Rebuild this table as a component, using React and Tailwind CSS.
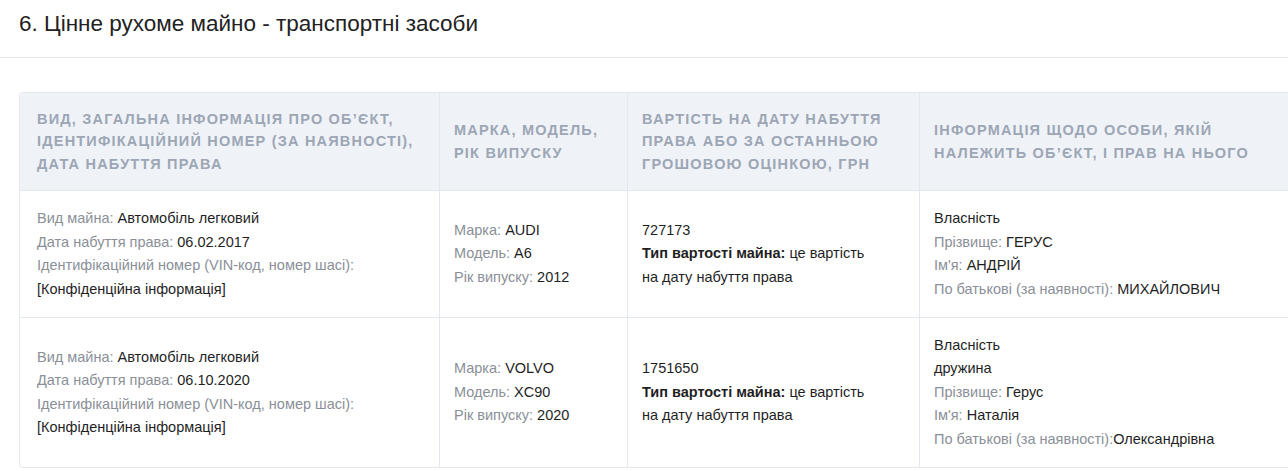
const rows = [
  {
    date: '06.02.2017',
    brand: 'AUDI',
    model: 'A6',
    year: '2012',
    cost: '727173',
    owner: [
      { value: 'Власність' },
      { label: 'Прізвище:', value: 'ГЕРУС' },
      { label: "Ім'я:", value: 'АНДРІЙ' },
      { label: 'По батькові (за наявності):', value: 'МИХАЙЛОВИЧ' },
    ],
  },
  {
    date: '06.10.2020',
    brand: 'VOLVO',
    model: 'XC90',
    year: '2020',
    cost: '1751650',
    owner: [
      { value: 'Власність' },
      { value: 'дружина' },
      { label: 'Прізвище:', value: 'Герус' },
      { label: "Ім'я:", value: 'Наталія' },
      { label: 'По батькові (за наявності):', value: 'Олександрівна', tight: true },
    ],
  },
]

function Line({ label, value, tight }) {
  return (
    <div>
      {label && <span className="text-[#8a8f98]">{label}</span>}
      {label && !tight && ' '}
      <span className="text-[#1f1f1f]">{value}</span>
    </div>
  )
}

const th = 'border-r border-[#e3e8ee] px-[14px] py-[12px] text-left align-middle font-bold uppercase leading-[22.5px] tracking-[1.2px] text-[#9ca6b4]'
const td = 'border-r border-[#e3e8ee] px-[14px] align-middle'

export default function App() {
  return (
    <div className="h-[471px] w-[1288px] overflow-hidden bg-white font-['Liberation_Sans',Arial,sans-serif] text-[14.5px] text-[#1f1f1f]">
      <h2 className="px-[19px] pt-[8px] pb-[17px] text-[22.5px] leading-[32px] text-[#222]">
        6. Цінне рухоме майно - транспортні засоби
      </h2>
      <div className="border-t border-[#e5e5e5] pt-[34px] pl-[19px]">
        <table className="w-[1292px] table-fixed border-separate border-spacing-0 overflow-hidden rounded-[4px] border border-[#e3e8ee] leading-[23.5px]">
          <thead>
            <tr className="bg-[#eff3f8] h-[97px]">
              <th className={th + ' w-[420px] pl-[17px]'}>
                Вид, загальна інформація про об’єкт, ідентифікаційний номер (за наявності), дата набуття права
              </th>
              <th className={th + ' w-[188px]'}>Марка, модель, рік випуску</th>
              <th className={th + ' w-[292px]'}>
                Вартість на дату набуття права або за останньою грошовою оцінкою, грн
              </th>
              <th className={th + ' border-r-0'}>
                Інформація щодо особи, якій належить об’єкт, і прав на нього
              </th>
            </tr>
          </thead>
          <tbody>
            {rows.map((r, i) => (
              <tr key={i} className={i === 0 ? 'h-[127px]' : 'h-[150px]'}>
                <td className={td + ' border-t pl-[17px]'}>
                  <Line label="Вид майна:" value="Автомобіль легковий" />
                  <Line label="Дата набуття права:" value={r.date} />
                  <Line label="Ідентифікаційний номер (VIN-код, номер шасі):" value="" />
                  <Line value="[Конфіденційна інформація]" />
                </td>
                <td className={td + ' border-t'}>
                  <Line label="Марка:" value={r.brand} />
                  <Line label="Модель:" value={r.model} />
                  <Line label="Рік випуску:" value={r.year} />
                </td>
                <td className={td + ' border-t'}>
                  <div>{r.cost}</div>
                  <div>
                    <b>Тип вартості майна:</b> це вартість
                    <br />
                    на дату набуття права
                  </div>
                </td>
                <td className={td + ' border-t border-r-0'}>
                  {r.owner.map((o, j) => (
                    <Line key={j} {...o} />
                  ))}
                </td>
              </tr>
            ))}
          </tbody>
        </table>
      </div>
    </div>
  )
}
